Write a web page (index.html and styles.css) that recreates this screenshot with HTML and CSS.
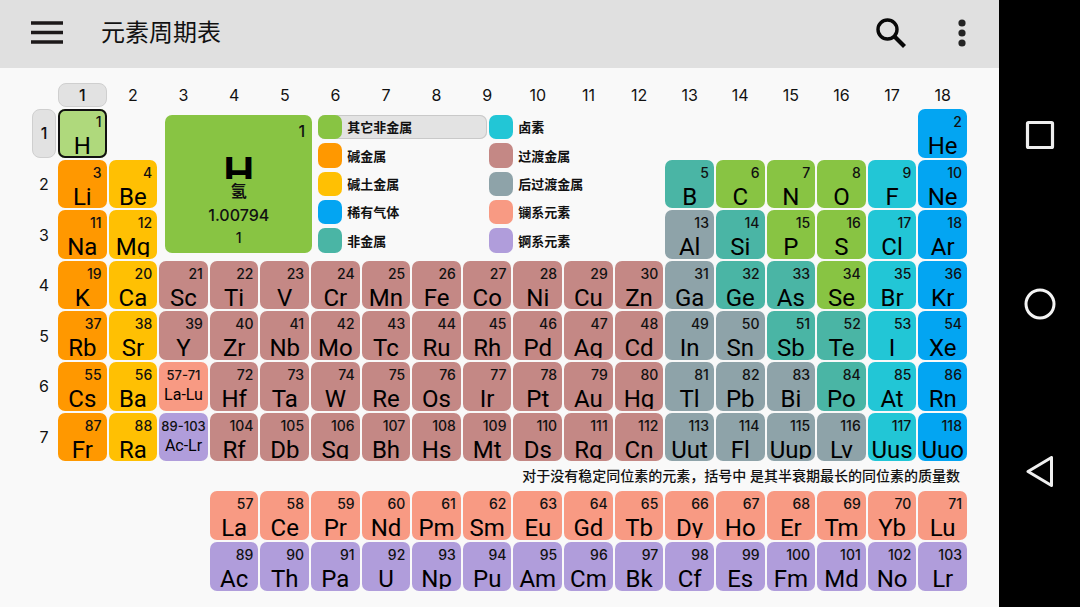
FILE: index.html
```html
<!DOCTYPE html>
<html lang="zh-CN">
<head>
<meta charset="utf-8">
<meta name="viewport" content="width=device-width, initial-scale=1">
<title>元素周期表</title>
<link rel="stylesheet" href="styles.css">
</head>
<body>
<div class="app">
  <header class="toolbar">
    <button class="icon-button" type="button" aria-label="菜单">
      <svg width="32" height="24" viewBox="0 0 32 24"><path d="M0 2h32M0 11.500h32M0 21h32" stroke="#1c1819" stroke-width="3.400"/></svg>
    </button>
    <h1 class="title">元素周期表</h1>
    <button class="icon-button" type="button" aria-label="搜索">
      <svg width="32" height="32" viewBox="0 0 32 32" fill="none" stroke="#080808"><circle cx="12.500" cy="12.500" r="9.500" stroke-width="3.400"/><path d="M19.500 19.500l10 10" stroke-width="4.200"/></svg>
    </button>
    <button class="icon-button more" type="button" aria-label="更多">
      <svg width="8" height="28" viewBox="0 0 8 28" fill="#242424"><circle cx="4" cy="4" r="3.600"/><circle cx="4" cy="14" r="3.600"/><circle cx="4" cy="24" r="3.600"/></svg>
    </button>
  </header>
  <main class="periodic" id="periodic">
    <section class="overview">
      <article class="detail">
        <span class="detail-number">1</span>
        <span class="detail-symbol">H</span>
        <span class="detail-name">氢</span>
        <span class="detail-mass">1.00794</span>
        <span class="detail-shell">1</span>
      </article>
      <div class="legend">
        <button type="button" class="legend-item selected"><i class="swatch other"></i>其它非金属</button>
        <button type="button" class="legend-item"><i class="swatch alkali"></i>碱金属</button>
        <button type="button" class="legend-item"><i class="swatch earth"></i>碱土金属</button>
        <button type="button" class="legend-item"><i class="swatch noble"></i>稀有气体</button>
        <button type="button" class="legend-item"><i class="swatch nonmetal"></i>非金属</button>
        <button type="button" class="legend-item"><i class="swatch halogen"></i>卤素</button>
        <button type="button" class="legend-item"><i class="swatch transition"></i>过渡金属</button>
        <button type="button" class="legend-item"><i class="swatch post"></i>后过渡金属</button>
        <button type="button" class="legend-item"><i class="swatch lanthanide"></i>镧系元素</button>
        <button type="button" class="legend-item"><i class="swatch actinide"></i>锕系元素</button>
      </div>
    </section>
    <p class="note">对于没有稳定同位素的元素，括号中 是其半衰期最长的同位素的质量数</p>
  </main>
</div>
<nav class="navbar" aria-label="系统导航">
  <button type="button" class="nav-button" aria-label="最近任务">
    <svg width="32" height="32" viewBox="0 0 32 32" fill="none" stroke="#eee" stroke-width="3.200"><rect x="3.500" y="3.500" width="25" height="25" rx="1"/></svg>
  </button>
  <button type="button" class="nav-button" aria-label="主页">
    <svg width="32" height="32" viewBox="0 0 32 32" fill="none" stroke="#f4f4f4" stroke-width="3"><circle cx="16" cy="16" r="14"/></svg>
  </button>
  <button type="button" class="nav-button" aria-label="返回">
    <svg width="32" height="32" viewBox="0 0 32 32" fill="none" stroke="#f0f0f0" stroke-width="3" stroke-linejoin="round"><path d="M27.500 1.500v28L4 15.500z"/></svg>
  </button>
</nav>
<script src="table.js"></script>
</body>
</html>
```
FILE: styles.css
```css
* { box-sizing: border-box; }

body {
  margin: 0;
  min-height: 100vh;
  display: grid;
  grid-template-columns: minmax(0, 1fr) 81px;
  background: #f9f9f9;
  color: #111;
  font-family: Inter, "Noto Sans CJK SC", sans-serif;
}

button {
  margin: 0;
  padding: 0;
  border: 0;
  background: none;
  color: inherit;
  font: inherit;
  cursor: pointer;
}

svg { display: block; }

.toolbar {
  display: flex;
  align-items: center;
  height: 68px;
  padding: 0 33px 2px 31px;
  background: #e0e0e0;
}

.title {
  flex: 1;
  margin: 0 0 0 38px;
  font-size: 24px;
  line-height: 32px;
  font-weight: 400;
}

.more { margin-left: 51px; }

.periodic {
  display: grid;
  grid-template-columns: 24px repeat(18, minmax(0, 1fr));
  gap: 2px;
  padding: 15px 32px;
}

.group, .period {
  display: flex;
  align-items: center;
  justify-content: center;
  border: 1px solid transparent;
  border-radius: 8px;
  font-size: 16px;
  line-height: 22px;
}

.group { grid-row: 1; }
.period { grid-column: 1; }

.group.selected, .period.selected {
  background: #e2e2e2;
  border-color: #cfcfcf;
  font-weight: 500;
}

.element {
  display: flex;
  flex-direction: column;
  aspect-ratio: 1;
  min-width: 0;
  padding: 4px 0 2px;
  border-radius: 7px;
  overflow: hidden;
}

.number {
  padding-right: 5px;
  text-align: right;
  font-size: 14px;
  line-height: 18px;
  font-weight: 500;
}

.symbol {
  flex: 1;
  min-height: 0;
  overflow: hidden;
  text-align: center;
  font-family: Roboto, sans-serif;
  font-size: 24px;
  line-height: 30px;
  font-weight: 400;
  color: #000;
}

.element.selected {
  background: #afd97c;
  box-shadow: inset 0 0 0 2px #111;
}

.series .number { padding: 0; text-align: center; font-size: 13px; }
.series .symbol { font-size: 16px; line-height: 22px; }

.other { background: #88c443; }
.alkali { background: #ff9800; }
.earth { background: #ffc003; }
.noble { background: #03a5f2; }
.nonmetal { background: #4ab5a5; }
.halogen { background: #22c6d6; }
.transition { background: #c48885; }
.post { background: #8ea3a9; }
.lanthanide { background: #f89a83; }
.actinide { background: #b09ddb; }

.overview {
  grid-column: 4 / 13;
  grid-row: 2 / 5;
  display: flex;
  gap: 6px;
  padding: 6px;
}

.detail {
  flex: 0 0 147px;
  display: flex;
  flex-direction: column;
  align-items: center;
  padding: 6px 7px 1px;
  border-radius: 7px;
  background: #88c443;
}

.detail-number {
  align-self: flex-end;
  font-size: 16px;
  line-height: 20px;
  font-weight: 500;
}

.detail-symbol {
  height: 38px;
  overflow: hidden;
  font-family: Roboto, sans-serif;
  font-size: 44px;
  line-height: 66px;
  font-weight: 600;
  color: #000;
}

.detail-name {
  font-size: 16px;
  line-height: 24px;
  font-weight: 700;
}

.detail-mass {
  font-size: 16px;
  line-height: 24px;
  font-weight: 500;
}

.detail-shell {
  font-size: 14px;
  line-height: 22px;
  font-weight: 500;
}

.legend {
  display: grid;
  grid-auto-flow: column;
  grid-template-rows: repeat(5, 1fr);
  grid-template-columns: 169px 1fr;
  gap: 4px 2px;
  flex: 1;
}

.legend-item {
  display: flex;
  align-items: center;
  gap: 5px;
  border-radius: 7px;
  font-size: 13px;
  line-height: 20px;
  font-weight: 700;
}

.legend-item.selected {
  background: #e3e3e3;
  box-shadow: inset 0 0 0 1px #c9c9c9;
}

.swatch {
  flex: none;
  align-self: stretch;
  width: 24px;
  border-radius: 7px;
}

.note {
  grid-column: 1 / -1;
  grid-row: 9;
  margin: 0;
  padding-right: 7px;
  text-align: right;
  font-size: 14px;
  line-height: 26px;
  font-weight: 500;
}

.navbar {
  display: flex;
  flex-direction: column;
  align-items: center;
  justify-content: space-between;
  padding: 119px 0;
  background: #000;
}
```
FILE: table.js
```js
const symbols = `H He Li Be B C N O F Ne Na Mg Al Si P S Cl Ar
K Ca Sc Ti V Cr Mn Fe Co Ni Cu Zn Ga Ge As Se Br Kr
Rb Sr Y Zr Nb Mo Tc Ru Rh Pd Ag Cd In Sn Sb Te I Xe
Cs Ba La Ce Pr Nd Pm Sm Eu Gd Tb Dy Ho Er Tm Yb Lu Hf Ta W Re Os Ir Pt Au Hg Tl Pb Bi Po At Rn
Fr Ra Ac Th Pa U Np Pu Am Cm Bk Cf Es Fm Md No Lr Rf Db Sg Bh Hs Mt Ds Rg Cn Uut Fl Uup Lv Uus Uuo`.split(/\s+/);

const periodStarts = [1, 3, 11, 19, 37, 55, 87];
const otherNonmetals = [1, 6, 7, 8, 15, 16, 34];
const nonmetals = [5, 14, 32, 33, 51, 52, 84];
const table = document.getElementById("periodic");

function place(tag, className, row, column, html) {
  const node = document.createElement(tag);
  node.className = className;
  node.style.gridRow = row;
  node.style.gridColumn = column;
  node.innerHTML = html;
  if (tag === "button") node.type = "button";
  table.append(node);
}

function cell(kind, row, column, number, symbol) {
  place("button", "element " + kind, row, column,
    `<span class="number">${number}</span><span class="symbol">${symbol}</span>`);
}

function category(n, group) {
  if (otherNonmetals.includes(n)) return "other";
  if (nonmetals.includes(n)) return "nonmetal";
  if (group === 1) return "alkali";
  if (group === 2) return "earth";
  if (group === 17) return "halogen";
  if (group === 18) return "noble";
  return group <= 12 ? "transition" : "post";
}

for (let g = 1; g <= 18; g++) place("div", "group" + (g === 1 ? " selected" : ""), 1, g + 1, g);
for (let p = 1; p <= 7; p++) place("div", "period" + (p === 1 ? " selected" : ""), p + 1, 1, p);

symbols.forEach((symbol, i) => {
  const n = i + 1;
  if (n >= 57 && n <= 71) return cell("lanthanide", 10, n - 52, n, symbol);
  if (n >= 89 && n <= 103) return cell("actinide", 11, n - 84, n, symbol);
  const period = periodStarts.filter(start => start <= n).length;
  const end = (periodStarts[period] || 119) - 1;
  const offset = n - periodStarts[period - 1];
  const group = offset < (period === 1 ? 1 : 2) ? offset + 1 : 18 - (end - n);
  cell(category(n, group) + (n === 1 ? " selected" : ""), period + 1, group + 1, n, symbol);
});

cell("lanthanide series", 7, 4, "57-71", "La-Lu");
cell("actinide series", 8, 4, "89-103", "Ac-Lr");
```
